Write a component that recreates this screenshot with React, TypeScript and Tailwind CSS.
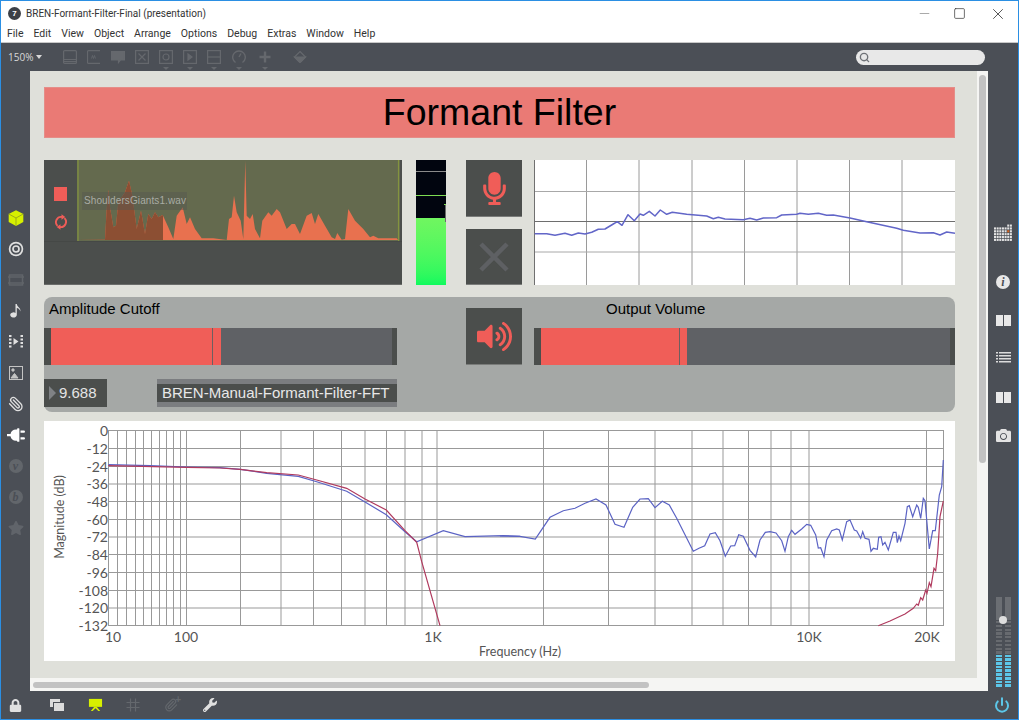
import React from 'react';
import { Paperclip, Power, Search, Minus, Square, X } from 'lucide-react';
import { FaCamera, FaLock, FaMicrophone, FaPlug, FaStar, FaVolumeUp, FaWrench } from 'react-icons/fa';

// traced points are in 3x zoom coords, ox/oy put them back on the page
const toPath = (pts: number[][], ox: number, oy: number) =>
  pts.map(([x, y], i) => `${i ? 'L' : 'M'}${(ox + x / 3).toFixed(1)} ${(oy + y / 3).toFixed(1)}`).join(' ');

const MENU = ['File', 'Edit', 'View', 'Object', 'Arrange', 'Options', 'Debug', 'Extras', 'Window', 'Help'];

const WAVE = [[145,273],[225,272],[230,180],[235,122],[240,175],[250,235],[258,230],[265,160],[285,130],[297,95],[307,140],[320,240],[333,185],[345,255],[355,195],[365,210],[375,190],[385,205],[398,198],[415,235],[430,270],[440,200],[458,175],[470,225],[480,205],[495,240],[515,268],[550,268],[590,273],[597,210],[605,205],[612,140],[620,190],[632,215],[640,270],[646,35],[650,200],[660,210],[668,195],[675,240],[690,268],[697,215],[715,190],[725,200],[740,180],[750,190],[770,240],[785,225],[795,225],[810,255],[830,200],[845,192],[855,225],[865,195],[885,230],[905,265],[915,270],[922,252],[935,272],[945,270],[955,180],[975,215],[1000,240],[1020,265],[1030,260],[1045,268],[1100,268],[1105,273]];

const SPECTRUM = [[44,251],[80,251],[105,256],[135,250],[155,256],[175,249],[195,252],[215,247],[235,238],[255,237],[280,222],[292,215],[306,226],[324,194],[343,212],[360,192],[370,196],[388,184],[405,198],[421,180],[440,193],[457,187],[500,193],[560,198],[580,206],[595,202],[615,207],[670,209],[690,205],[710,210],[730,204],[770,203],[785,195],[830,193],[840,190],[865,193],[895,190],[920,196],[940,195],[990,204],[1040,215],[1130,235],[1150,241],[1200,249],[1240,248],[1260,255],[1280,246],[1305,250]];

const BLUE_LOW = [[205,134],[330,137],[440,141],[540,143],[601,148],[680,160],[775,169],[830,185],[920,214],[975,246],[1039,284],[1095,335],[1130,365],[1210,332],[1275,350],[1390,347],[1440,349]];
const BLUE_HIGH = [[0,348],[60,349],[106,357],[150,292],[190,272],[225,265],[255,250],[288,237],[318,255],[345,313],[372,322],[398,262],[420,237],[445,236],[465,263],[487,244],[508,255],[530,295],[580,394],[597,385],[614,377],[630,342],[646,338],[660,362],[676,409],[692,378],[704,377],[716,344],[730,349],[750,391],[767,411],[780,360],[796,337],[810,335],[828,339],[845,362],[855,394],[865,350],[875,331],[885,343],[905,327],[920,313],[932,316],[947,345],[955,384],[962,383],[972,410],[980,360],[995,332],[1010,327],[1018,330],[1027,360],[1040,305],[1050,300],[1063,330],[1070,333],[1082,355],[1088,335],[1095,355],[1107,358],[1113,394],[1120,385],[1132,388],[1136,352],[1143,350],[1148,375],[1155,367],[1165,390],[1180,337],[1188,337],[1192,368],[1197,348],[1202,362],[1215,310],[1222,260],[1228,257],[1238,290],[1250,255],[1255,262],[1262,295],[1270,235],[1275,242],[1288,387],[1298,332],[1306,332],[1318,225],[1325,200],[1330,120]];
const RED_LOW = [[205,137],[440,142],[540,144],[601,148],[680,158],[775,165],[830,180],[920,205],[975,237],[1039,270],[1095,332],[1130,367],[1145,425],[1200,617]];
const RED_HIGH = [[1135,617],[1170,603],[1215,582],[1240,565],[1250,552],[1255,556],[1262,533],[1268,540],[1277,510],[1281,520],[1288,488],[1293,500],[1302,445],[1307,452],[1313,400],[1320,290],[1330,243]];

const H_LINES = [430.5, 448.5, 466.5, 484, 501.5, 519.5, 537, 554.5, 572.5, 590.5, 608, 625.5];
const V_LINES = [108.5, 117.5, 126.5, 135.5, 143.5, 151.5, 159.5, 166.5, 173.5, 180.5, 186.5, 240.5, 281, 313.5, 341.5, 365, 386.5, 405, 422, 437, 543.5, 608.5, 655, 692, 723, 748.5, 771, 791, 809, 926.5, 943.5];
const DB_LABELS = ['0', '-12', '-24', '-36', '-48', '-60', '-72', '-84', '-96', '-108', '-120', '-132'];
const HZ_LABELS: [string, number][] = [['10', 113], ['100', 186], ['1K', 433], ['10K', 809], ['20K', 927]];

function ToolIcon({ children, arrow }: { children: React.ReactNode; arrow?: boolean }) {
  return (
    <div className="relative w-[14px] h-[14px]">
      <svg viewBox="0 0 14 14" className="w-[14px] h-[14px] text-[#65686d]" fill="none" stroke="currentColor" strokeWidth="1.2">
        {children}
      </svg>
      {arrow && <div className="absolute left-[4px] top-[17px] w-0 h-0 border-x-[3px] border-x-transparent border-t-[3px] border-t-[#65686d]" />}
    </div>
  );
}

function Toolbar() {
  return (
    <div className="h-[28px] bg-[#4b4f56] flex items-center pl-[7px] pr-[33px] shrink-0">
      <span className="w-[24px] text-[10px] text-[#d8d8d8] font-['Open_Sans',sans-serif]">150%</span>
      <div className="ml-[4px] w-0 h-0 border-x-[3px] border-x-transparent border-t-[4px] border-t-[#d8d8d8]" />
      <div className="ml-[21px] flex items-center gap-[10px]">
        <ToolIcon><rect x="0.6" y="0.6" width="12.8" height="12.8" rx="1" /><path d="M1 9.5h12M1 11.5h12" /></ToolIcon>
        <ToolIcon><path d="M13 .6H1.5a1 1 0 0 0-1 1v10.8a1 1 0 0 0 1 1H13" /><path d="M4.5 8.5l1-3 1 3 1-3 1 3" strokeWidth="0.8" /></ToolIcon>
        <ToolIcon><path d="M.5 1.5h13v8.5H9.5l-2 2.5v-2.5h-7z" fill="currentColor" /></ToolIcon>
        <ToolIcon><rect x="0.6" y="0.6" width="12.8" height="12.8" /><path d="M3.5 3.5l7 7M10.5 3.5l-7 7" /></ToolIcon>
        <ToolIcon arrow><rect x="0.6" y="0.6" width="12.8" height="12.8" /><circle cx="7" cy="7" r="3" /></ToolIcon>
        <ToolIcon arrow><rect x="0.6" y="0.6" width="12.8" height="12.8" /><path d="M5 4l4 3-4 3z" fill="currentColor" /></ToolIcon>
        <ToolIcon arrow><rect x="0.6" y="0.6" width="12.8" height="12.8" /><path d="M1 7h12" /></ToolIcon>
      </div>
      <div className="ml-[11px]">
        <ToolIcon arrow><path d="M3.5 12.5a6.3 6.3 0 1 1 7 0" strokeWidth="1.4" /><path d="M7 7l2-3.5" strokeWidth="1.4" /></ToolIcon>
      </div>
      <div className="ml-[12px]">
        <ToolIcon arrow><path d="M7 1.5v11M1.5 7h11" strokeWidth="2.4" /></ToolIcon>
      </div>
      <div className="ml-[21px]">
        <ToolIcon><path d="M7 1.500l5.500 5.500-5 5a.7.7 0 0 1-1 0L1.500 7z" /><path d="M1.500 7h11l-5 5a.7.7 0 0 1-1 0z" fill="currentColor" /></ToolIcon>
      </div>
      <div className="ml-auto w-[129px] h-[15px] rounded-full bg-[#e8e8e8] flex items-center pl-[3px]">
        <Search size={11} strokeWidth={3} className="text-[#6f7277]" />
      </div>
    </div>
  );
}

function LeftBar() {
  const on = 'text-[#e0e0e0]';
  const dim = 'text-[#60646a]';
  return (
    <div className="w-[29px] shrink-0 bg-[#4b4f56] flex flex-col items-center gap-[13px] pt-[138px]">
      <svg viewBox="0 0 16 16" className="w-[18px] h-[18px]">
        <path d="M8 1l6.5 3.4v7.2L8 15l-6.5-3.4V4.4z" fill="#d7f000" />
        <path d="M1.5 4.4L8 8l6.500-3.600M8 8v7" stroke="#8d9a20" strokeWidth="0.7" fill="none" />
      </svg>
      <svg viewBox="0 0 18 18" className={`w-[18px] h-[18px] ${on}`} fill="none" stroke="currentColor" strokeWidth="1.7">
        <circle cx="9" cy="9" r="6.4" /><circle cx="9" cy="9" r="3" />
      </svg>
      <svg viewBox="0 0 18 18" className={`w-[18px] h-[18px] ${dim}`} fill="none" stroke="currentColor" strokeWidth="1.5">
        <rect x="2.500" y="4" width="13" height="10" /><path d="M1 6h16M1 12h16" />
      </svg>
      <svg viewBox="0 0 18 18" className={`w-[18px] h-[18px] ${on}`} fill="currentColor">
        <path d="M8.500 2h1.300c.3 3 4.200 3.500 3.600 7.500-.6-2.300-2-3.300-3.600-3.600v7.100a3.300 2.600 0 1 1-1.300-2.100z" />
      </svg>
      <svg viewBox="0 0 18 18" className={`w-[18px] h-[18px] ${on}`} fill="currentColor">
        <path d="M2 2h2.500v2H2zM2 5.500h2.500v2H2zM2 9h2.500v2H2zM2 12.500h2.500v2H2zM13.500 2H16v2h-2.500zM13.500 5.500H16v2h-2.500zM13.500 9H16v2h-2.500zM13.500 12.500H16v2h-2.500zM6.500 5l5 3.500-5 3.500z" />
      </svg>
      <svg viewBox="0 0 18 18" className="w-[18px] h-[18px] text-[#c4c4c4]" fill="none" stroke="currentColor" strokeWidth="1">
        <rect x="2.500" y="2.500" width="13" height="13" />
        <path d="M4 14l3.500-4.500L11 14z" fill="currentColor" /><circle cx="6" cy="6" r="1.200" fill="currentColor" />
      </svg>
      <div className="h-[18px] flex items-center">
        <Paperclip size={16} strokeWidth={2} className={`${on} -scale-x-100`} />
      </div>
      <FaPlug size={18} className="text-white rotate-90" />
      <Badge letter="v" />
      <Badge letter="b" />
      <FaStar size={16} className={`${dim} h-[18px]`} />
    </div>
  );
}

function Badge({ letter }: { letter: string }) {
  return (
    <div className="w-[14px] h-[18px] flex items-center justify-center">
      <div className="w-[14px] h-[14px] rounded-full bg-[#62666b] flex items-center justify-center text-[12px] leading-none italic font-bold text-[#4b4f56] font-['Liberation_Serif',serif]">
        {letter}
      </div>
    </div>
  );
}

function RightBar() {
  const dots = [];
  for (let r = 0; r < 6; r++) {
    for (let c = 0; c < 7; c++) {
      if (r === 0 && c < 5) continue;
      dots.push(<rect key={`${r}-${c}`} x={c * 2.500} y={r * 2.700} width="1.900" height="2" fill={r === 2 && c === 5 ? '#d8641e' : '#e4e4e4'} />);
    }
  }
  return (
    <div className="w-[30px] shrink-0 bg-[#4b4f56] flex flex-col items-center pt-[153px] pb-[4px]">
      <svg viewBox="0 0 17 16" className="w-[18px] h-[18px]">{dots}</svg>
      <div className="mt-[33px] w-[14px] h-[14px] rounded-full bg-[#e8e8e8] flex items-center justify-center text-[12px] leading-none italic font-bold text-[#4b4f56] font-['Liberation_Serif',serif]">
        i
      </div>
      <BookIcon className="mt-[26px]" />
      <svg viewBox="0 0 15 14" className="mt-[25px] w-[15px] h-[14px] text-[#dcdcdc]" fill="currentColor">
        <path d="M0 1h2v1.500H0zM3 1h12v1.500H3zM0 4h2v1.500H0zM3 4h12v1.500H3zM0 7h2v1.500H0zM3 7h12v1.500H3zM0 10h2v1.500H0zM3 10h12v1.500H3z" />
      </svg>
      <BookIcon className="mt-[27px]" />
      <FaCamera size={15} className="mt-[25px] text-[#e4e4e4]" />
      <OutputMeter />
    </div>
  );
}

function BookIcon({ className }: { className: string }) {
  return (
    <div className={`${className} flex gap-[1px]`}>
      <div className="w-[7px] h-[11px] bg-[#e8e8e8]" />
      <div className="w-[7px] h-[11px] bg-[#e8e8e8]" />
    </div>
  );
}

function MeterColumn() {
  const rest = Array.from({ length: 9 });
  const lit = Array.from({ length: 9 });
  return (
    <div className="w-[6px] flex flex-col">
      <div className="h-[25px] bg-[#6b6e73]" />
      {rest.map((_, i) => (
        <div key={i} className="h-[2.500px] mt-[1.500px] bg-[#676a6f]" />
      ))}
      {lit.map((_, i) => (
        <div key={i} className="h-[3px] mt-[1px] bg-[#5cc6e8]" />
      ))}
    </div>
  );
}

function OutputMeter() {
  return (
    <div className="relative mt-auto flex gap-[3px] h-[90px] overflow-hidden">
      <MeterColumn />
      <MeterColumn />
      <div className="absolute left-[3px] top-[19px] w-[8px] h-[8px] rounded-full bg-[#dedede]" />
    </div>
  );
}

function BottomBar() {
  return (
    <div className="h-[28px] shrink-0 bg-[#4b4f56] flex items-center pl-[8px] pr-[8px]">
      <FaLock size={13} className="text-[#e0e0e0]" />
      <div className="relative ml-[28px] w-[15px] h-[12px]">
        <div className="absolute left-0 top-0 w-[10px] h-[8px] bg-[#dcdcdc]" />
        <div className="absolute left-[3px] top-[3px] w-[11px] h-[9px] bg-[#dcdcdc] border-l border-t border-[#4b4f56]" />
      </div>
      <svg viewBox="0 0 16 14" className="ml-[23px] w-[15px] h-[14px]" fill="#d7f000">
        <rect x="1" y="0.500" width="14" height="8.500" />
        <path d="M6.500 9L3 13.500h2L8 10.500l3 3h2L9.500 9z" />
      </svg>
      <svg viewBox="0 0 14 14" className="ml-[23px] w-[14px] h-[14px] text-[#64686d]" fill="none" stroke="currentColor" strokeWidth="1.200">
        <path d="M4.500 .5v13M9.500 .5v13M.5 4.500h13M.5 9.500h13" />
      </svg>
      <div className="relative ml-[24px] w-[14px] h-[14px]">
        <Paperclip size={14} strokeWidth={2} className="text-[#64686d]" />
        <div className="absolute -right-[3px] -top-[3px] text-[10px] leading-none font-bold text-[#64686d]">+</div>
      </div>
      <FaWrench size={14} className="ml-[25px] text-[#e0e0e0]" />
      <Power size={16} strokeWidth={3} className="ml-auto text-[#5cc6e8]" />
    </div>
  );
}

function LoopIcon() {
  return (
    <svg viewBox="0 0 16 16" className="mt-[13px] w-[16px] h-[16px] text-[#f05d58]" fill="none" stroke="currentColor" strokeWidth="1.900">
      <path d="M9 3A5.200 5.200 0 0 0 4.500 11.800" />
      <path d="M7 13A5.200 5.200 0 0 0 11.500 4.200" />
      <path d="M8.500.2v5.600L12.300 3zM7.500 10.200v5.600L3.700 13z" fill="currentColor" stroke="none" />
    </svg>
  );
}

function Waveform() {
  return (
    <div className="w-[358px] h-[125px] bg-[#4b4e4c] border-b border-[#6a6c6a] flex flex-col">
      <div className="h-[82px] flex border-b border-[#454846]">
        <div className="w-[33px] flex flex-col items-center pt-[27px]">
          <div className="w-[13px] h-[14px] bg-[#f05d58]" />
          <LoopIcon />
        </div>
        <div className="relative w-[323px]">
          <svg viewBox="77 161 323 81" className="w-[323px] h-[81px]">
            <defs>
              <clipPath id="played"><rect x="77" y="161" width="86" height="81" /></clipPath>
            </defs>
            <rect x="77" y="161" width="323" height="81" fill="#646a4e" />
            <path d={`${toPath(WAVE, 30, 150)}Z`} fill="#e8714f" />
            <path d={`${toPath(WAVE, 30, 150)}Z`} fill="#8c4f33" clipPath="url(#played)" />
            <path d="M78 161v81M398.500 161v81" stroke="#84943f" strokeWidth="1.200" />
          </svg>
          <div className="absolute left-[5px] top-[32px] w-[105px] h-[18px] bg-[#55585080] pl-[2px] text-[10px] tracking-[0.1px] leading-[18px] text-[#a9aca4] whitespace-nowrap">
            ShouldersGiants1.wav
          </div>
        </div>
      </div>
    </div>
  );
}

function LevelMeter() {
  return (
    <div className="relative w-[30px] h-[125px] flex flex-col">
      <div className="h-[58px] bg-[#01050f] relative">
        <div className="absolute inset-x-0 top-[11px] h-[1px] bg-[#8a8a8a]" />
        <div className="absolute inset-x-0 top-[35px] h-[1px] bg-[#7ddc52]" />
      </div>
      <div className="flex-1 bg-gradient-to-b from-[#70f660] to-[#0cfa5e]" />
      <div className="absolute right-0 top-[45px] w-[1px] h-[17px] bg-[#6a6d6a]" />
      <div className="absolute right-0 top-[44px] w-[2px] h-[1px] bg-[#7ddc52]" />
    </div>
  );
}

function SquareButton({ children, className }: { children: React.ReactNode; className?: string }) {
  return (
    <div className={`w-[56px] bg-[#4b4e4c] border-b border-[#7a7c7a] flex items-center justify-center ${className}`}>
      {children}
    </div>
  );
}

function Spectrum() {
  return (
    <div className="w-[421px] h-[125px] bg-white">
      <svg viewBox="534 160 421 125" className="w-[421px] h-[125px]" fill="none">
        {[586.5, 639, 692, 744.5, 797, 849.5, 902].map((x) => (
          <path key={x} d={`M${x} 160v125`} stroke="#9a9a9a" />
        ))}
        <path d="M534 191.500h421M534 252h421" stroke="#a8a8a8" />
        <path d="M534.500 160v125" stroke="#707070" />
        <path d="M534 221.500h421" stroke="#6e6e6e" />
        <path d={toPath(SPECTRUM, 520, 150)} stroke="#6266c8" strokeWidth="1.500" strokeLinejoin="round" />
      </svg>
    </div>
  );
}

function Slider({ width, fill, mark, end }: { width: string; fill: string; mark: string; end: string }) {
  return (
    <div className={`relative ${width} h-[37px] flex bg-[#5f6165]`}>
      <div className="w-[7px] bg-[#4b4e4c]" />
      <div className={`${fill} bg-[#f05e58]`} />
      <div className={`absolute top-0 bottom-0 ${mark} w-[1px] bg-[#6d5f60]`} />
      <div className={`ml-auto ${end} bg-[#4b4e4c]`} />
    </div>
  );
}

function ControlPanel() {
  return (
    <div className="mt-[12px] h-[115px] rounded-[8px] bg-[#a5a8a6] flex flex-col">
      <div className="flex h-[68px]">
        <div className="w-[353px] flex flex-col justify-between">
          <div className="pl-[5px] pt-[3px] text-[15px] leading-[18px] text-black">Amplitude Cutoff</div>
          <Slider width="w-[353px]" fill="w-[170px]" mark="left-[168px]" end="w-[5px]" />
        </div>
        <SquareButton className="ml-[69px] h-[57px] self-end">
          <FaVolumeUp size={35} className="text-[#f05d58]" />
        </SquareButton>
        <div className="ml-[12px] w-[421px] flex flex-col justify-between">
          <div className="pl-[72px] pt-[3px] text-[15px] leading-[18px] text-black">Output Volume</div>
          <Slider width="w-[421px]" fill="w-[146px]" mark="left-[145px]" end="w-[5px]" />
        </div>
      </div>
      <div className="mt-[14px] h-[28px] flex">
        <div className="w-[63px] bg-[#4b4e4c] flex items-center pl-[5px]">
          <div className="w-0 h-0 border-y-[7px] border-y-transparent border-l-[7px] border-l-[#7f8285]" />
          <span className="ml-[3px] text-[15px] text-[#e4e4e4]">9.688</span>
        </div>
        <div className="ml-[50px] w-[240px] bg-[#7b7d80] flex items-center">
          <div className="w-full h-[18px] bg-[#4b4e4c] pl-[5px] text-[15px] leading-[18px] text-[#e8e8e8] whitespace-nowrap">
            BREN-Manual-Formant-Filter-FFT
          </div>
        </div>
      </div>
    </div>
  );
}

function FilterGraph() {
  return (
    <div className="mt-[9px] h-[240px] bg-white">
      <svg viewBox="44 421 911 240" className="w-[911px] h-[240px]" fill="none">
        {H_LINES.map((y) => (
          <path key={y} d={`M108 ${y}H944`} stroke="#999999" />
        ))}
        {V_LINES.map((x) => (
          <path key={x} d={`M${x} 431V626`} stroke="#999999" />
        ))}
        <path d={toPath(BLUE_LOW, 40, 420)} stroke="#5b63c4" strokeWidth="1.200" />
        <path d={toPath(BLUE_HIGH, 500, 420)} stroke="#5b63c4" strokeWidth="1.200" />
        <path d={toPath(RED_LOW, 40, 420)} stroke="#b03a5e" strokeWidth="1.200" />
        <path d={toPath(RED_HIGH, 500, 420)} stroke="#b03a5e" strokeWidth="1.200" />
        {DB_LABELS.map((t, i) => (
          <text key={t} x="108" y={H_LINES[i] + 5} textAnchor="end" className="font-['Lato',sans-serif] text-[14px] fill-[#555555]">
            {t}
          </text>
        ))}
        {HZ_LABELS.map(([t, x]) => (
          <text key={t} x={x} y="642" textAnchor="middle" className="font-['Lato',sans-serif] text-[14px] fill-[#555555]">
            {t}
          </text>
        ))}
        <text x="520" y="656" textAnchor="middle" className="font-['Lato',sans-serif] text-[12.500px] fill-[#555555]">
          Frequency (Hz)
        </text>
        <text x="64" y="517" textAnchor="middle" transform="rotate(-90 64 517)" className="font-['Lato',sans-serif] text-[12.500px] fill-[#555555]">
          Magnitude (dB)
        </text>
      </svg>
    </div>
  );
}

function Canvas() {
  return (
    <div className="w-[958px] shrink-0 flex flex-col bg-[#f5f5f3]">
      <div className="flex h-[607px]">
        <div className="w-[947px] h-[607px] bg-[#dfe0da] pl-[14px] pt-[16px] overflow-hidden">
          <div className="w-[911px]">
            <div className="h-[51px] pb-[1px] bg-[#ea7a75] border border-[#e58d88] flex items-center justify-center text-[37.500px] text-black">
              Formant Filter
            </div>
            <div className="mt-[22px] flex h-[125px]">
              <Waveform />
              <div className="ml-[14px]"><LevelMeter /></div>
              <div className="ml-[20px] flex flex-col justify-between">
                <SquareButton className="h-[57px]">
                  <FaMicrophone size={33} className="text-[#f05d58]" />
                </SquareButton>
                <SquareButton className="h-[56px]">
                  <svg viewBox="0 0 30 30" className="w-[30px] h-[30px]">
                    <path d="M2 2l26 26M28 2L2 28" stroke="#5e6063" strokeWidth="4.500" />
                  </svg>
                </SquareButton>
              </div>
              <div className="ml-[12px]"><Spectrum /></div>
            </div>
            <ControlPanel />
            <FilterGraph />
          </div>
        </div>
        <div className="w-[11px] pl-[2px] pt-[4px]">
          <div className="w-[7px] h-[388px] rounded-full bg-[#c2c2c2]" />
        </div>
      </div>
      <div className="h-[13px] pl-[3px] pt-[4px]">
        <div className="w-[616px] h-[6px] rounded-full bg-[#c2c2c2]" />
      </div>
    </div>
  );
}

export default function App() {
  return (
    <div className="w-[1019px] h-[720px] overflow-hidden flex flex-col bg-[#4b4f56] border-x border-y border-[#2b8fe3] font-['Liberation_Sans',sans-serif]">
      <div className="h-[25px] shrink-0 bg-white flex items-center pl-[7px] pr-[11px]">
        <div className="w-[13px] h-[13px] rounded-full bg-[#3c4047] flex items-center justify-center text-[8px] leading-none font-bold text-white">7</div>
        <span className="ml-[5px] text-[10px] text-[#333333] font-['Roboto',sans-serif]">BREN-Formant-Filter-Final (presentation)</span>
        <Minus size={15} strokeWidth={1} className="ml-auto text-[#777777]" />
        <Square size={13} strokeWidth={1.300} className="ml-[21px] text-[#333333]" />
        <X size={18} strokeWidth={1} className="ml-[23px] text-[#222222]" />
      </div>
      <div className="h-[17px] shrink-0 bg-white border-b border-[#c8c8c8] flex items-start pl-[6px] gap-[10px] text-[10.500px] leading-[15px] text-[#333333] font-['Roboto',sans-serif]">
        {MENU.map((m) => (
          <span key={m}>{m}</span>
        ))}
      </div>
      <Toolbar />
      <div className="flex h-[620px] shrink-0">
        <LeftBar />
        <Canvas />
        <RightBar />
      </div>
      <BottomBar />
    </div>
  );
}
